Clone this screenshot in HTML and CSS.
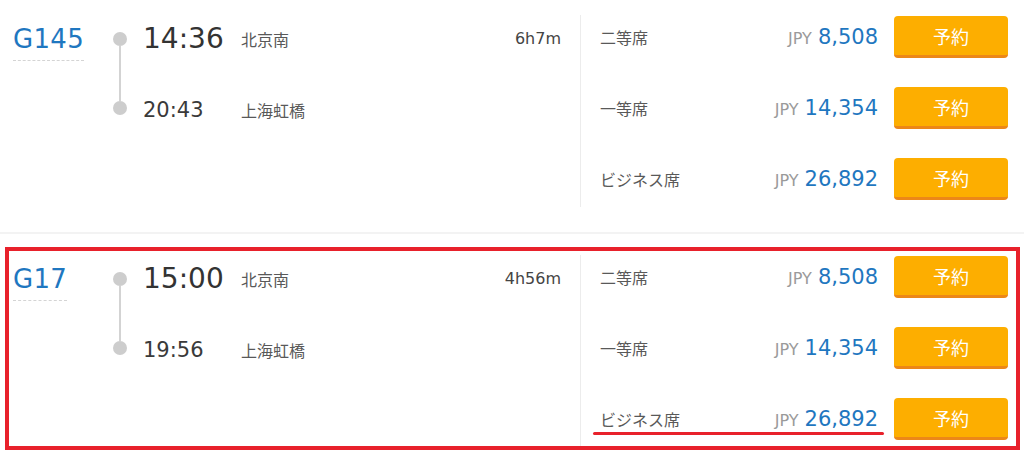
FILE: index.html
```html
<!DOCTYPE html>
<html lang="ja">
<head>
<meta charset="utf-8">
<title>列車一覧</title>
<link rel="stylesheet" href="styles.css">
</head>
<body>
<div class="list">
  <div class="item item-first">
    <div class="train"><span class="train-no">G145</span></div>
    <div class="route">
      <div class="timeline"><span class="dot"></span><span class="line"></span><span class="dot"></span></div>
      <div class="stops">
        <div class="stop"><span class="time time-dep">14:36</span><span class="station">北京南</span><span class="dur">6h7m</span></div>
        <div class="stop"><span class="time">20:43</span><span class="station">上海虹橋</span></div>
      </div>
    </div>
    <div class="fares">
      <div class="fare"><span class="seat">二等席</span><span class="cur">JPY</span><span class="price">8,508</span><button class="book">予約</button></div>
      <div class="fare"><span class="seat">一等席</span><span class="cur">JPY</span><span class="price">14,354</span><button class="book">予約</button></div>
      <div class="fare"><span class="seat">ビジネス席</span><span class="cur">JPY</span><span class="price">26,892</span><button class="book">予約</button></div>
    </div>
  </div>
  <div class="item item-marked">
    <div class="train"><span class="train-no">G17</span></div>
    <div class="route">
      <div class="timeline"><span class="dot"></span><span class="line"></span><span class="dot"></span></div>
      <div class="stops">
        <div class="stop"><span class="time time-dep">15:00</span><span class="station">北京南</span><span class="dur">4h56m</span></div>
        <div class="stop"><span class="time">19:56</span><span class="station">上海虹橋</span></div>
      </div>
    </div>
    <div class="fares">
      <div class="fare"><span class="seat">二等席</span><span class="cur">JPY</span><span class="price">8,508</span><button class="book">予約</button></div>
      <div class="fare"><span class="seat">一等席</span><span class="cur">JPY</span><span class="price">14,354</span><button class="book">予約</button></div>
      <div class="fare fare-underlined"><span class="seat">ビジネス席</span><span class="cur">JPY</span><span class="price">26,892</span><button class="book">予約</button></div>
    </div>
  </div>
</div>
</body>
</html>
```

FILE: styles.css
```css
*, *::before, *::after { box-sizing: border-box; }
html, body { margin: 0; padding: 0; background: #fff; }
body {
  font-family: "DejaVu Sans", "Noto Sans CJK JP", sans-serif;
  color: #333;
  width: 1024px;
  height: 467px;
  overflow: hidden;
}
.item {
  position: relative;
  display: flex;
  align-items: flex-start;
  padding: 22px 16px 25px 13px;
  border-bottom: 2px solid #f3f3f3;
}
.item-first { padding-top: 16px; }
.item-marked { border-bottom: none; padding-bottom: 0; }
.item-marked::before {
  content: "";
  position: absolute;
  left: 5px;
  top: 13px;
  width: 1015px;
  height: 203px;
  border: 4px solid #e8212b;
  pointer-events: none;
}
.train { width: 100px; padding-top: 8px; }
.train-no {
  display: inline-block;
  font-size: 26px;
  line-height: 30px;
  color: #1f77c0;
  padding-bottom: 6px;
  border-bottom: 1px dashed #d4d4d4;
  letter-spacing: 0.3px;
}
.route {
  width: 467px;
  display: flex;
  padding-top: 1px;
}
.timeline {
  width: 14px;
  height: 83px;
  margin-top: 15px;
  display: flex;
  flex-direction: column;
  align-items: center;
}
.dot {
  width: 14px;
  height: 14px;
  border-radius: 50%;
  background: #cdcdcd;
  flex: none;
}
.line {
  width: 2px;
  flex: 1;
  background: #d3d3d3;
}
.stops {
  flex: 1;
  margin-left: 16px;
  padding-right: 19px;
  display: flex;
  flex-direction: column;
  gap: 29px;
}
.stop {
  height: 42px;
  display: flex;
  align-items: center;
}
.time {
  width: 98px;
  font-size: 21px;
  color: #3a3a3a;
  padding-top: 2px;
}
.time-dep { font-size: 28px; color: #333; padding-top: 0; }
.station {
  font-size: 16px;
  color: #595959;
  padding-top: 2px;
}
.dur {
  margin-left: auto;
  font-size: 16px;
  color: #444;
}
.fares {
  flex: 1;
  border-left: 1px solid #ececec;
  margin-top: -1px;
  padding: 1px 0 7px 19px;
  display: flex;
  flex-direction: column;
  gap: 29px;
}
.fare {
  position: relative;
  height: 42px;
  display: flex;
  align-items: center;
}
.seat {
  flex: 1;
  font-size: 16px;
  color: #595959;
}
.cur {
  font-size: 16px;
  color: #9a9a9a;
  margin-right: 6px;
  padding-top: 2px;
}
.price {
  font-size: 21px;
  color: #1f77c0;
}
.book {
  margin-left: 16px;
  width: 114px;
  height: 42px;
  border: none;
  border-bottom: 3px solid #ec8718;
  border-radius: 4px;
  background: #fdae00;
  color: #fff;
  font-family: "Noto Sans CJK JP", sans-serif;
  font-size: 18px;
  padding: 0;
  cursor: pointer;
}
.fare-underlined::after {
  content: "";
  position: absolute;
  left: -7px;
  right: 124px;
  top: 34px;
  height: 3px;
  border-radius: 2px;
  background: #e8212b;
}
```
